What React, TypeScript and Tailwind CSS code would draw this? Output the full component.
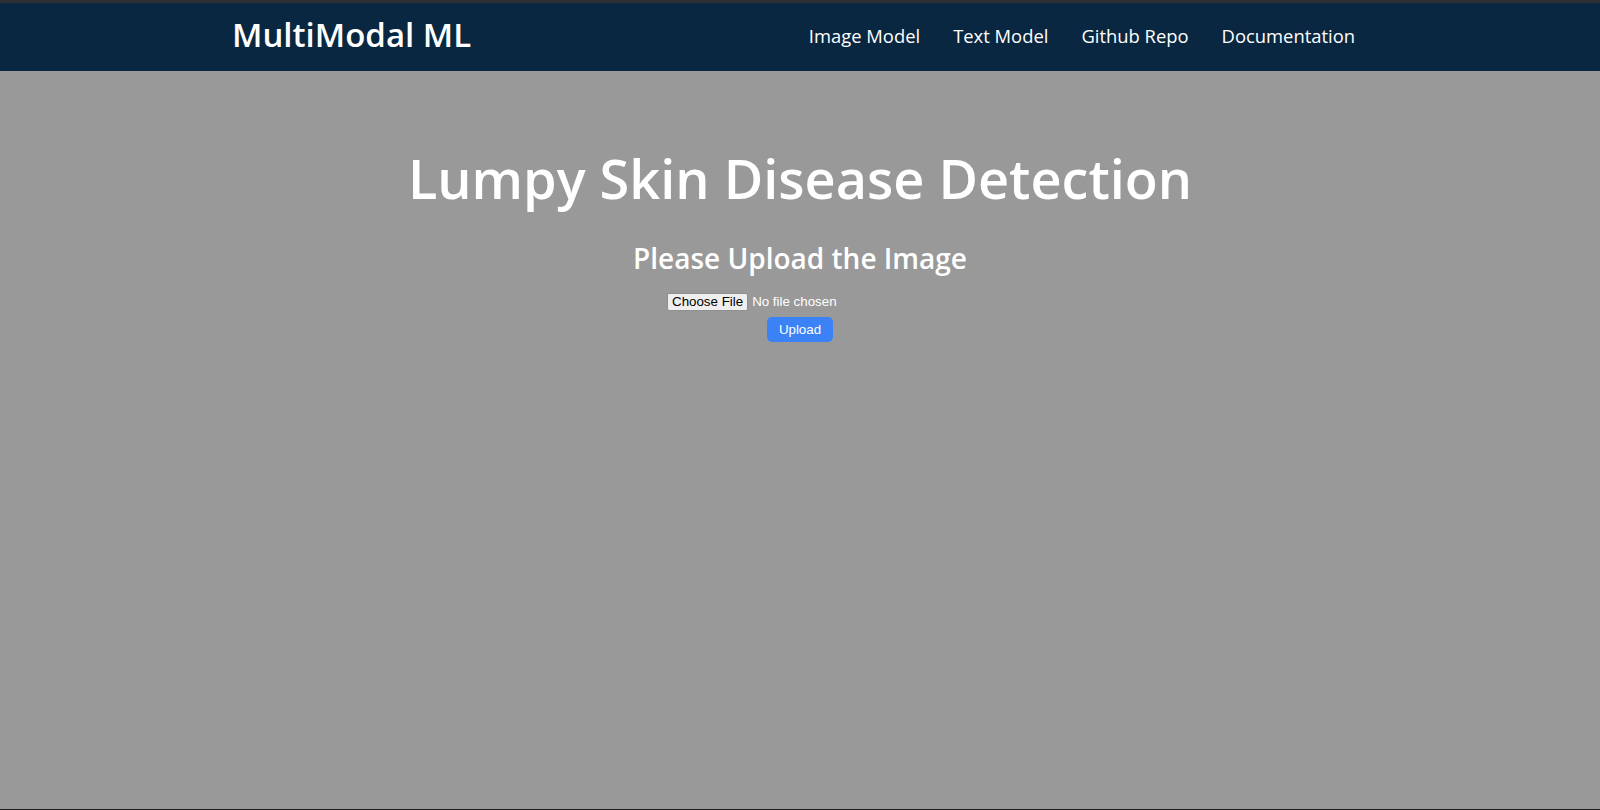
import React from "react";

export default function App() {
  const font = { fontFamily: '"Open Sans", "Noto Sans", sans-serif' };
  const arial = { fontFamily: '"Liberation Sans", Arial, sans-serif' };
  return (
    <div className="min-h-[810px] h-[810px] w-full bg-[#999999] flex flex-col" style={font}>
      <header className="h-[71px] border-t-[3px] border-[#2e3133] bg-[#0a2741] flex items-center shrink-0">
        <div className="ml-[232px] w-[1123px] flex items-center justify-between">
          <div className="text-white text-[33px] font-semibold leading-none pb-[6px]">MultiModal ML</div>
          <nav className="flex items-center gap-[33px] text-white text-[18.4px] font-medium pb-[3px]">
            <a>Image Model</a>
            <a>Text Model</a>
            <a>Github Repo</a>
            <a>Documentation</a>
          </nav>
        </div>
      </header>
      <main className="flex-1 flex flex-col items-center">
        <h1 className="mt-[80px] text-white text-[54px] font-semibold leading-none">Lumpy Skin Disease Detection</h1>
        <h2 className="mt-[39px] text-white text-[28px] font-semibold leading-none">Please Upload the Image</h2>
        <div className="mt-[21px] w-[266px] flex items-center" style={arial}>
          <span className="h-[18px] px-[4px] flex items-center bg-[#efefef] border border-[#8f8f8f] rounded-[2px] text-black text-[13.33px] leading-none">Choose File</span>
          <span className="ml-[4px] text-white text-[13.33px] leading-none">No file chosen</span>
        </div>
        <button
          className="mt-[6px] w-[66px] h-[25px] rounded-[5px] bg-[#3b82f6] text-white text-[13.33px] leading-none"
          style={arial}
        >
          Upload
        </button>
      </main>
      <div className="h-[1px] bg-[#1e1e1e] shrink-0" />
    </div>
  );
}
